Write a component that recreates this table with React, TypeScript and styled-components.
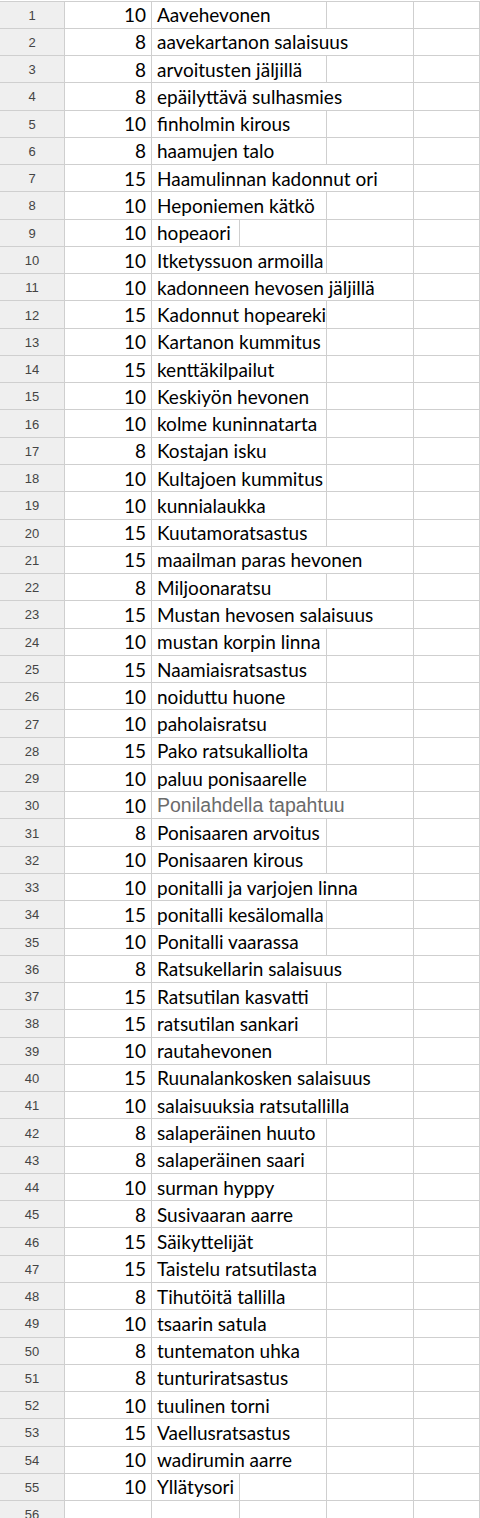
import React from 'react';
import styled, { createGlobalStyle } from 'styled-components';

type Book = [number, string, number];

// points, title, how many columns the title spills over
const books: Book[] = [
  [10, 'Aavehevonen', 2],
  [8, 'aavekartanon salaisuus', 3],
  [8, 'arvoitusten jäljillä', 2],
  [8, 'epäilyttävä sulhasmies', 3],
  [10, 'finholmin kirous', 2],
  [8, 'haamujen talo', 2],
  [15, 'Haamulinnan kadonnut ori', 3],
  [10, 'Heponiemen kätkö', 2],
  [10, 'hopeaori', 1],
  [10, 'Itketyssuon armoilla', 2],
  [10, 'kadonneen hevosen jäljillä', 3],
  [15, 'Kadonnut hopeareki', 2],
  [10, 'Kartanon kummitus', 2],
  [15, 'kenttäkilpailut', 2],
  [10, 'Keskiyön hevonen', 2],
  [10, 'kolme kuninnatarta', 2],
  [8, 'Kostajan isku', 2],
  [10, 'Kultajoen kummitus', 2],
  [10, 'kunnialaukka', 2],
  [15, 'Kuutamoratsastus', 2],
  [15, 'maailman paras hevonen', 3],
  [8, 'Miljoonaratsu', 2],
  [15, 'Mustan hevosen salaisuus', 3],
  [10, 'mustan korpin linna', 2],
  [15, 'Naamiaisratsastus', 2],
  [10, 'noiduttu huone', 2],
  [10, 'paholaisratsu', 2],
  [15, 'Pako ratsukalliolta', 2],
  [10, 'paluu ponisaarelle', 2],
  [10, 'Ponilahdella tapahtuu', 3],
  [8, 'Ponisaaren arvoitus', 2],
  [10, 'Ponisaaren kirous', 2],
  [10, 'ponitalli ja varjojen linna', 3],
  [15, 'ponitalli kesälomalla', 2],
  [10, 'Ponitalli vaarassa', 2],
  [8, 'Ratsukellarin salaisuus', 3],
  [15, 'Ratsutilan kasvatti', 2],
  [15, 'ratsutilan sankari', 2],
  [10, 'rautahevonen', 2],
  [15, 'Ruunalankosken salaisuus', 3],
  [10, 'salaisuuksia ratsutallilla', 3],
  [8, 'salaperäinen huuto', 2],
  [8, 'salaperäinen saari', 2],
  [10, 'surman hyppy', 2],
  [8, 'Susivaaran aarre', 2],
  [15, 'Säikyttelijät', 2],
  [15, 'Taistelu ratsutilasta', 2],
  [8, 'Tihutöitä tallilla', 2],
  [10, 'tsaarin satula', 2],
  [8, 'tuntematon uhka', 2],
  [8, 'tunturiratsastus', 2],
  [10, 'tuulinen torni', 2],
  [15, 'Vaellusratsastus', 2],
  [10, 'wadirumin aarre', 2],
  [10, 'Yllätysori', 1],
];

// row 30 was pasted in with a different font
const PASTED_ROW = 30;

const App: React.FC = () => (
  <>
    <GlobalStyle />
    <Sheet>
      {books.map(([points, title, span], i) => (
        <Row key={title}>
          <RowHeader>{i + 1}</RowHeader>
          <NumberCell>{points}</NumberCell>
          <TitleCell $span={span} $pasted={i + 1 === PASTED_ROW}>
            {title}
          </TitleCell>
          {Array.from({ length: 4 - span }).map((_, j) => (
            <Cell key={j} />
          ))}
        </Row>
      ))}
      <Row>
        <RowHeader>{books.length + 1}</RowHeader>
        <Cell />
        <Cell />
        <Cell />
        <Cell />
        <Cell />
      </Row>
    </Sheet>
  </>
);

export default App;

const GlobalStyle = createGlobalStyle`
  html, body {
    margin: 0;
    padding: 0;
    background: #ffffff;
    overflow: hidden;
  }
`;

const Sheet = styled.div`
  display: flex;
  flex-direction: column;
  border-top: 1px solid #cfcfcf;
  margin-top: 0.5px;
`;

const Row = styled.div`
  display: grid;
  grid-template-columns: 65px 87px 87.5px 87px 87px 1fr;
  height: 27.27px;
  box-sizing: border-box;
  border-bottom: 1px solid #cfcfcf;
`;

const Cell = styled.div`
  border-right: 1px solid #cfcfcf;
  display: flex;
  align-items: center;
  min-width: 0;
  overflow: visible;
  white-space: nowrap;
  font-family: Lato, 'Liberation Sans', sans-serif;
  font-size: 19px;
  color: #000000;
`;

const RowHeader = styled(Cell)`
  justify-content: center;
  background: #efefef;
  font-family: 'Liberation Sans', Arial, sans-serif;
  font-size: 13px;
  color: #444444;
  padding-top: 1px;
`;

const NumberCell = styled(Cell)`
  justify-content: flex-end;
  padding-right: 5px;
`;

const TitleCell = styled(Cell)<{ $span: number; $pasted?: boolean }>`
  grid-column: span ${(p) => p.$span};
  padding-left: 5px;
  ${(p) =>
    p.$pasted &&
    `
    font-family: 'Liberation Sans', Arial, sans-serif;
    font-size: 19.5px;
    color: #6b6b6b;
  `}
`;
